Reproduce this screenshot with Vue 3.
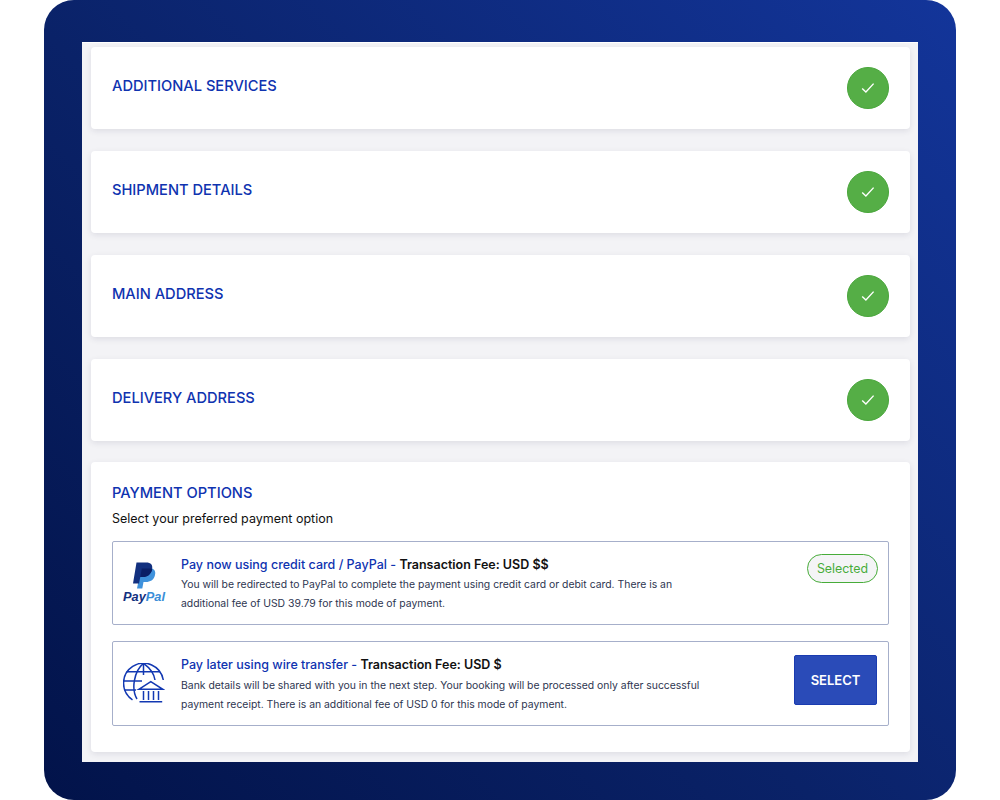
<script setup>
const sections = ['ADDITIONAL SERVICES', 'SHIPMENT DETAILS', 'MAIN ADDRESS', 'DELIVERY ADDRESS']
</script>

<template>
  <div class="frame">
    <div class="panel">
      <div v-for="s in sections" :key="s" class="card step">
        <div class="title">{{ s }}</div>
        <div class="done">
          <svg width="14" height="12" viewBox="0 0 14 12" fill="none">
            <path d="M1.2 6.4 L4.9 10 L12.6 1.6" stroke="#fff" stroke-width="1.4" />
          </svg>
        </div>
      </div>

      <div class="card payment">
        <div class="title">PAYMENT OPTIONS</div>
        <div class="hint">Select your preferred payment option</div>

        <div class="option first">
          <div class="logo">
            <svg width="24" height="27" viewBox="0 0 24 27">
              <path d="M9 6 H17 C22 6 24 9 23 13 C22 18 18 20 14 20 H11.5 L10.3 26.5 H5 Z" fill="#3f92dc" />
              <path d="M4.5 0.5 H14 C19 0.5 21 3 20 7.5 C19 12.5 15 15 11 15 H8.3 L7 21.5 H1 Z" fill="#12307f" />
              <path d="M8.3 15 L9.8 6.5 H17 C18.6 6.5 19.8 6.8 20.2 7.5 C19 12.5 15 15 11 15 Z" fill="#0a1f66" />
            </svg>
            <span class="pp"><b class="pay">Pay</b><b class="pal">Pal</b></span>
          </div>
          <div class="body">
            <div class="head"><span class="blue">Pay now using credit card / PayPal - </span><span class="fee">Transaction Fee: USD $$</span></div>
            <p class="desc wide">You will be redirected to PayPal to complete the payment using credit card or debit card. There is an additional fee of USD 39.79 for this mode of payment.</p>
          </div>
          <div class="selected">Selected</div>
        </div>

        <div class="option second">
          <div class="logo bank">
            <svg width="42" height="40" viewBox="0 0 42 40" fill="none" stroke="#1238b2" stroke-width="1.5">
              <path d="M40.3 17 A20 20 0 1 0 9.5 36.9" />
              <path d="M20.5 0.3 C11 8 8 26 14 36" />
              <path d="M20.5 0.3 C27 5 31 10 32 17" />
              <path d="M20.5 0.3 V12" />
              <path d="M3.5 8.7 H37 M0.5 18 H19 M1.5 27 H13" />
              <path d="M15.8 26.3 L27.8 18.7 L39.8 26.3 Z" />
              <path d="M20.5 28 V37 M25.5 28 V37 M30.5 28 V37 M35.5 28 V37 M16.5 38.7 H39.2" />
            </svg>
          </div>
          <div class="body">
            <div class="head"><span class="blue">Pay later using wire transfer - </span><span class="fee">Transaction Fee: USD $</span></div>
            <p class="desc">Bank details will be shared with you in the next step. Your booking will be processed only after successful payment receipt. There is an additional fee of USD 0 for this mode of payment.</p>
          </div>
          <button class="select">SELECT</button>
        </div>
      </div>
    </div>
  </div>
</template>

<style>
html, body { margin: 0; background: #fff; }
</style>

<style scoped>
.frame {
  box-sizing: border-box;
  width: 912px;
  height: 800px;
  margin: 0 44px;
  padding: 42px 38px 38px;
  border-radius: 30px;
  background: linear-gradient(45deg, #02134a 0%, #0a2268 45%, #13359a 100%);
  font-family: Inter, "Liberation Sans", sans-serif;
}
.panel {
  box-sizing: border-box;
  height: 720px;
  padding: 5px 8px 0 9px;
  background: #f3f3f6;
  box-shadow: inset 0 1px 0 #fff;
  display: flex;
  flex-direction: column;
  gap: 22px;
  overflow: hidden;
}
.card {
  background: #fff;
  border-radius: 4px;
  box-shadow: 0 2px 6px rgba(30, 30, 70, 0.1);
}
.step {
  box-sizing: border-box;
  height: 82px;
  padding: 20px 21px 0;
  display: flex;
  justify-content: space-between;
}
.title {
  font-size: 14.65px;
  line-height: 36px;
  height: 36px;
  font-weight: 500;
  color: #0f33b0;
}
.step .title {
  line-height: 38px;
}
.done {
  box-sizing: border-box;
  width: 42px;
  height: 42px;
  border: 1px solid #49a63b;
  border-radius: 50%;
  background: #55ae46;
  display: flex;
  align-items: center;
  justify-content: center;
}
.payment {
  height: 290px;
  box-sizing: border-box;
  padding: 13px 21px 0;
  margin-top: -1px;
}
.hint {
  font-size: 12.5px;
  line-height: 16px;
  color: #111;
  margin-bottom: 14px;
}
.option {
  box-sizing: border-box;
  height: 85px;
  border: 1px solid #a6afca;
  border-radius: 2px;
  display: flex;
  padding: 13px 11px 0 10px;
  position: relative;
}
.option.first {
  height: 84px;
  margin-bottom: 16px;
}
.logo {
  width: 42px;
  margin-right: 16px;
  flex: none;
  display: flex;
  flex-direction: column;
  align-items: center;
  padding-top: 7px;
}
.logo.bank {
  padding-top: 8px;
}
.pp {
  font-family: "Liberation Sans", sans-serif;
  font-style: italic;
  font-size: 12.8px;
  line-height: 14px;
  margin-top: 1px;
}
.pay { color: #12307f; }
.pal { color: #3a8ed8; }
.body {
  flex: 1;
}
.head {
  font-size: 12.5px;
  line-height: 20px;
  font-weight: 500;
}
.second .head {
  margin-bottom: 1px;
}
.blue { color: #0f33b0; }
.fee { color: #111; font-weight: 600; }
.desc {
  margin: 0;
  width: 530px;
  font-size: 10.4px;
  line-height: 19px;
  color: #2d3550;
}
.desc.wide { width: 500px; }
.selected {
  position: absolute;
  top: 12px;
  right: 10px;
  box-sizing: border-box;
  width: 71px;
  height: 29px;
  border: 1px solid #47ac39;
  border-radius: 15px;
  background: #f4f4f6;
  color: #47ac39;
  font-size: 12.4px;
  line-height: 27px;
  text-align: center;
}
.select {
  position: absolute;
  top: 13px;
  right: 11px;
  width: 83px;
  height: 50px;
  border: 1px solid #1a3bb0;
  border-radius: 2px;
  background: #2a4bb8;
  color: #fff;
  font-family: Inter, sans-serif;
  font-size: 13px;
  font-weight: 600;
  padding: 0;
}
</style>
